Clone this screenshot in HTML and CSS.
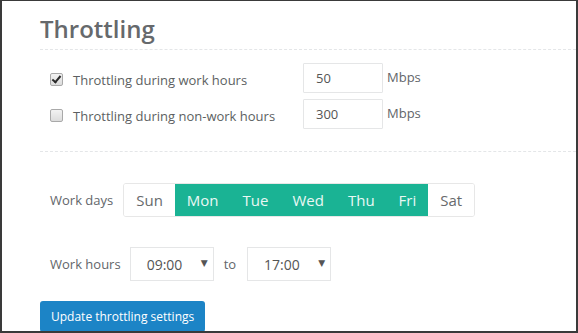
FILE: index.html
```html
<!DOCTYPE html>
<html>
  <head>
    <title>Throttling</title>
    <link rel="stylesheet" href="styles.css">
  </head>
  <body>
    <div class="frame">
      <div class="section">
        <h2 class="title">Throttling</h2>

        <div class="limits">
          <div class="limit-row">
            <label class="check">
              <input type="checkbox" checked>
              <span>Throttling during work hours</span>
            </label>
            <input class="form-control rate" type="text" value="50">
            <span class="unit">Mbps</span>
          </div>
          <div class="limit-row">
            <label class="check">
              <input type="checkbox">
              <span>Throttling during non-work hours</span>
            </label>
            <input class="form-control rate" type="text" value="300">
            <span class="unit">Mbps</span>
          </div>
        </div>

        <div class="schedule">
          <div class="field-row">
            <span class="field-label">Work days</span>
            <div class="day-group">
              <button class="day">Sun</button>
              <button class="day active">Mon</button>
              <button class="day active">Tue</button>
              <button class="day active">Wed</button>
              <button class="day active">Thu</button>
              <button class="day active">Fri</button>
              <button class="day">Sat</button>
            </div>
          </div>

          <div class="field-row hours">
            <span class="field-label">Work hours</span>
            <div class="select-box">
              <span>09:00</span>
              <span class="caret">&#9660;</span>
            </div>
            <span class="to">to</span>
            <div class="select-box">
              <span>17:00</span>
              <span class="caret">&#9660;</span>
            </div>
          </div>

          <button class="btn-primary">Update throttling settings</button>
        </div>
      </div>
    </div>
  </body>
</html>
```

FILE: styles.css
```css
body {
  margin: 0;
  font-family: "Open Sans", "DejaVu Sans", sans-serif;
  color: #676a6c;
  background: #fff;
}

.frame {
  width: 578px;
  height: 333px;
  box-sizing: border-box;
  border: 2px solid #3a3a3a;
  border-top-width: 1px;
  overflow: hidden;
  background: #fff;
}

.section {
  padding-left: 38px;
}

.title {
  margin: 0;
  padding-top: 14px;
  padding-bottom: 6px;
  font-size: 24px;
  font-weight: 600;
  line-height: 28px;
  color: #66696c;
  border-bottom: 1px dashed #e4e6e8;
}

.limits {
  padding: 13px 0 22px 10px;
  border-bottom: 1px dashed #e4e6e8;
}

.limit-row {
  display: flex;
  align-items: flex-start;
  height: 30px;
  margin-bottom: 6px;
}

.limit-row:last-child {
  margin-bottom: 0;
}

.check {
  display: flex;
  align-items: center;
  width: 253px;
  height: 30px;
  padding-top: 3px;
  box-sizing: border-box;
  font-size: 13px;
  color: #5c5f62;
}

.check input {
  appearance: none;
  -webkit-appearance: none;
  position: relative;
  box-sizing: border-box;
  width: 13px;
  height: 13px;
  margin: 0 10px 0 0;
  border: 1px solid #a9a9a9;
  border-radius: 2px;
  background: linear-gradient(#f2f2f2, #dcdcdc);
}

.check input:checked::after {
  content: "";
  position: absolute;
  left: 3px;
  top: 0px;
  width: 3px;
  height: 7px;
  border: solid #2a2a2a;
  border-width: 0 2px 2px 0;
  transform: rotate(40deg);
}

.form-control {
  box-sizing: border-box;
  border: 1px solid #e5e6e7;
  border-radius: 1px;
  background: #fff;
  font-family: inherit;
  color: #555;
  outline: none;
}

.rate {
  width: 80px;
  height: 30px;
  padding: 0 12px;
  font-size: 13px;
}

.unit {
  margin-left: 4px;
  padding-top: 4px;
  font-size: 13px;
  line-height: 20px;
  color: #62666a;
}

.schedule {
  padding-top: 31px;
}

.field-row {
  display: flex;
  align-items: center;
  padding-left: 10px;
}

.field-label {
  font-size: 13px;
  color: #62666a;
  margin-right: 10px;
}

.day-group {
  display: flex;
  height: 34px;
  border: 1px solid #e7e7e7;
  border-radius: 3px;
  box-sizing: border-box;
  overflow: hidden;
}

.day {
  border: none;
  background: #fff;
  font-family: inherit;
  font-size: 15px;
  color: #676a6c;
  padding: 0 12px;
  height: 32px;
}

.day.active {
  background: #1ab394;
  color: #eaf8f4;
}

.hours {
  margin-top: 30px;
}

.hours .field-label {
  margin-right: 9px;
}

.select-box {
  display: flex;
  align-items: center;
  justify-content: space-between;
  box-sizing: border-box;
  width: 84px;
  height: 34px;
  padding: 0 5px 0 16px;
  border: 1px solid #e5e6e7;
  font-size: 14px;
  color: #555;
}

.caret {
  font-size: 9px;
  color: #555;
  margin-top: -4px;
}

.to {
  font-size: 13px;
  color: #62666a;
  margin: 0 11px 0 10px;
}

.btn-primary {
  margin-top: 20px;
  height: 31px;
  padding: 0 11px;
  border: none;
  border-radius: 3px;
  background: #1c84c6;
  color: #fff;
  font-family: inherit;
  font-size: 12px;
}
```
